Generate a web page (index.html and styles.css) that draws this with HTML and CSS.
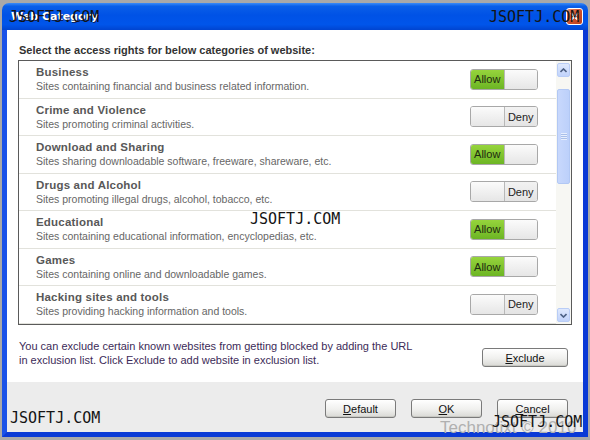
FILE: index.html
```html
<!DOCTYPE html>
<html>
<head>
<meta charset="utf-8">
<link rel="stylesheet" href="styles.css">
</head>
<body>
<div class="window">
  <div class="titlebar">
    <span class="title">Web Category</span>
    <span class="close">
      <svg width="9" height="9" viewBox="0 0 9 9"><path d="M1 1L8 8M8 1L1 8" stroke="#fff" stroke-width="1.8"/></svg>
    </span>
  </div>
  <div class="frame">
    <div class="content">
      <div class="heading">Select the access rights for below categories of website:</div>
      <div class="listbox">
        <div class="rows">
          <div class="row">
            <div class="info"><div class="name">Business</div><div class="desc">Sites containing financial and business related information.</div></div>
            <div class="toggle on"><span class="lbl">Allow</span><span class="knob"></span></div>
          </div>
          <div class="row">
            <div class="info"><div class="name">Crime and Violence</div><div class="desc">Sites promoting criminal activities.</div></div>
            <div class="toggle off"><span class="knob"></span><span class="lbl">Deny</span></div>
          </div>
          <div class="row">
            <div class="info"><div class="name">Download and Sharing</div><div class="desc">Sites sharing downloadable software, freeware, shareware, etc.</div></div>
            <div class="toggle on"><span class="lbl">Allow</span><span class="knob"></span></div>
          </div>
          <div class="row">
            <div class="info"><div class="name">Drugs and Alcohol</div><div class="desc">Sites promoting illegal drugs, alcohol, tobacco, etc.</div></div>
            <div class="toggle off"><span class="knob"></span><span class="lbl">Deny</span></div>
          </div>
          <div class="row">
            <div class="info"><div class="name">Educational</div><div class="desc">Sites containing educational information, encyclopedias, etc.</div></div>
            <div class="toggle on"><span class="lbl">Allow</span><span class="knob"></span></div>
          </div>
          <div class="row">
            <div class="info"><div class="name">Games</div><div class="desc">Sites containing online and downloadable games.</div></div>
            <div class="toggle on"><span class="lbl">Allow</span><span class="knob"></span></div>
          </div>
          <div class="row">
            <div class="info"><div class="name">Hacking sites and tools</div><div class="desc">Sites providing hacking information and tools.</div></div>
            <div class="toggle off"><span class="knob"></span><span class="lbl">Deny</span></div>
          </div>
        </div>
        <div class="scrollbar">
          <div class="sbtn"><svg width="7" height="5" viewBox="0 0 7 5"><path d="M0.5 4L3.5 1L6.5 4" fill="none" stroke="#4d6185" stroke-width="1.6"/></svg></div>
          <div class="track">
            <div class="thumb"><span class="grip"></span></div>
          </div>
          <div class="sbtn"><svg width="7" height="5" viewBox="0 0 7 5"><path d="M0.5 1L3.5 4L6.5 1" fill="none" stroke="#4d6185" stroke-width="1.6"/></svg></div>
        </div>
      </div>
      <div class="exclusion">
        <p class="note">You can exclude certain known websites from getting blocked by adding the URL<br>in exclusion list. Click Exclude to add website in exclusion list.</p>
        <button class="btn exclude"><u>E</u>xclude</button>
      </div>
    </div>
    <div class="footer">
      <button class="btn"><u>D</u>efault</button>
      <button class="btn"><u>O</u>K</button>
      <button class="btn"><u>C</u>ancel</button>
    </div>
  </div>
  <span class="credit">Technotixt © 2010</span>
  <span class="wm wm-tl">JSOFTJ.COM</span>
  <span class="wm wm-tr">JSOFTJ.COM</span>
  <span class="wm wm-c">JSOFTJ.COM</span>
  <span class="wm wm-bl">JSOFTJ.COM</span>
  <span class="wm wm-br">JSOFTJ.COM</span>
</div>
</body>
</html>
```
FILE: styles.css
```css
html, body {
  margin: 0;
  padding: 0;
}
body {
  background: #a9a9a9;
  width: 590px;
  height: 440px;
  overflow: hidden;
  font-family: "Liberation Sans", Arial, sans-serif;
}
.window {
  position: relative;
  margin: 3px 2px;
  width: 586px;
  height: 434px;
  display: flex;
  flex-direction: column;
}
.titlebar {
  height: 27px;
  flex: none;
  border-radius: 7px 7px 0 0;
  background: linear-gradient(#3b8cf8 0%, #0a5fe8 12%, #0052e6 45%, #0055ea 80%, #0044d0 100%);
  display: flex;
  align-items: center;
  justify-content: space-between;
  padding: 0 5px 0 9px;
}
.title {
  color: #fff;
  font-weight: bold;
  font-size: 11px;
  font-family: "DejaVu Sans", sans-serif;
  text-shadow: 1px 1px 0 #0a246a;
}
.close {
  width: 17px;
  height: 17px;
  box-sizing: border-box;
  border: 1px solid #fff;
  border-radius: 3px;
  background: linear-gradient(135deg, #e88a6a, #d0502a 50%, #b8401e);
  display: flex;
  align-items: center;
  justify-content: center;
}
.frame {
  flex: 1;
  display: flex;
  flex-direction: column;
  border: 5px solid #0a3ad6;
  border-top: 0;
  border-left-color: #1a52e8;
}
.content {
  background: #fff;
  flex: 1;
  padding: 14px 11px 0 11px;
  display: flex;
  flex-direction: column;
}
.heading {
  font-size: 11px;
  font-weight: bold;
  color: #333;
  margin-left: 1px;
  line-height: 13px;
}
.listbox {
  margin-top: 3px;
  height: 265px;
  box-sizing: border-box;
  border: 1px solid #5a5a5a;
  display: flex;
}
.rows {
  flex: 1;
  overflow: hidden;
}
.row {
  height: 36.5px;
  border-bottom: 1px solid #e2e2dc;
  display: flex;
  align-items: center;
  justify-content: space-between;
  padding: 0 18px 0 17px;
}
.name {
  font-size: 11.5px;
  font-weight: bold;
  color: #585858;
  letter-spacing: 0.2px;
  line-height: 15px;
}
.desc {
  font-size: 10.5px;
  color: #666;
  line-height: 13px;
}
.toggle {
  width: 68px;
  height: 21px;
  box-sizing: border-box;
  border: 1px solid #a8a8a8;
  border-radius: 3px;
  display: flex;
  overflow: hidden;
  font-size: 11px;
  color: #222;
}
.toggle .lbl, .toggle .knob {
  flex: 1;
  display: flex;
  align-items: center;
  justify-content: center;
}
.toggle.on .lbl {
  background: linear-gradient(#96d43c, #6cb524);
  color: #1e2a10;
}
.toggle .knob {
  background: linear-gradient(#fbfbfb, #e6e6e6);
}
.toggle.on .knob {
  border-left: 1px solid #b8b8b8;
}
.toggle.off .knob {
  border-right: 1px solid #b8b8b8;
}
.toggle.off .lbl {
  background: linear-gradient(#f2f2f2, #e4e4e4);
}
.scrollbar {
  width: 15px;
  flex: none;
  background: #f7f7f3;
  display: flex;
  flex-direction: column;
  padding: 2px 1px;
  box-sizing: border-box;
}
.sbtn {
  height: 14px;
  flex: none;
  border-radius: 2px;
  background: linear-gradient(#dfe9fd, #c1d3fb);
  border: 1px solid #b9cdf6;
  box-sizing: border-box;
  display: flex;
  align-items: center;
  justify-content: center;
}
.track {
  flex: 1;
  padding: 12px 0 124px 0;
  display: flex;
}
.thumb {
  flex: 1;
  border-radius: 2px;
  background: linear-gradient(90deg, #c8d8fc, #bcd0fa);
  border: 1px solid #b2c8f4;
  display: flex;
  align-items: center;
  justify-content: center;
}
.grip {
  width: 6px;
  height: 7px;
  background: repeating-linear-gradient(#e8effe 0 1px, #a9bfe9 1px 2px);
}
.exclusion {
  display: flex;
  align-items: flex-start;
  justify-content: space-between;
  padding: 14px 4px 0 1px;
}
.note {
  margin: 0;
  font-size: 11px;
  line-height: 14px;
  color: #3c2b58;
}
.btn {
  width: 71px;
  height: 19px;
  padding: 0;
  border: 1px solid #7a7a7a;
  border-radius: 3px;
  background: linear-gradient(#ffffff, #f0f0ee 55%, #d9d9d5);
  font-family: "Liberation Sans", Arial, sans-serif;
  font-size: 11px;
  color: #111;
  box-shadow: inset 0 -1px 0 #c9c9c4;
}
.btn.exclude {
  width: 86px;
  margin-top: 9px;
}
.footer {
  height: 50px;
  flex: none;
  background: #ececec;
  display: flex;
  justify-content: flex-end;
  align-items: flex-start;
  gap: 15px;
  padding: 17px 15px 0 0;
  box-sizing: border-box;
}
.credit {
  position: absolute;
  left: 438px;
  top: 415px;
  font-size: 17px;
  color: #b0b0b0;
  white-space: nowrap;
  font-family: "Liberation Sans", Arial, sans-serif;
}
.wm {
  position: absolute;
  font-family: "DejaVu Sans Mono", monospace;
  font-size: 15px;
  color: #141414;
  white-space: nowrap;
  line-height: 16px;
}
.wm-tl { left: 7px; top: 6px; }
.wm-tr { left: 487px; top: 6px; }
.wm-c { left: 248px; top: 208px; }
.wm-bl { left: 8px; top: 407px; }
.wm-br { left: 490px; top: 411px; }
```
